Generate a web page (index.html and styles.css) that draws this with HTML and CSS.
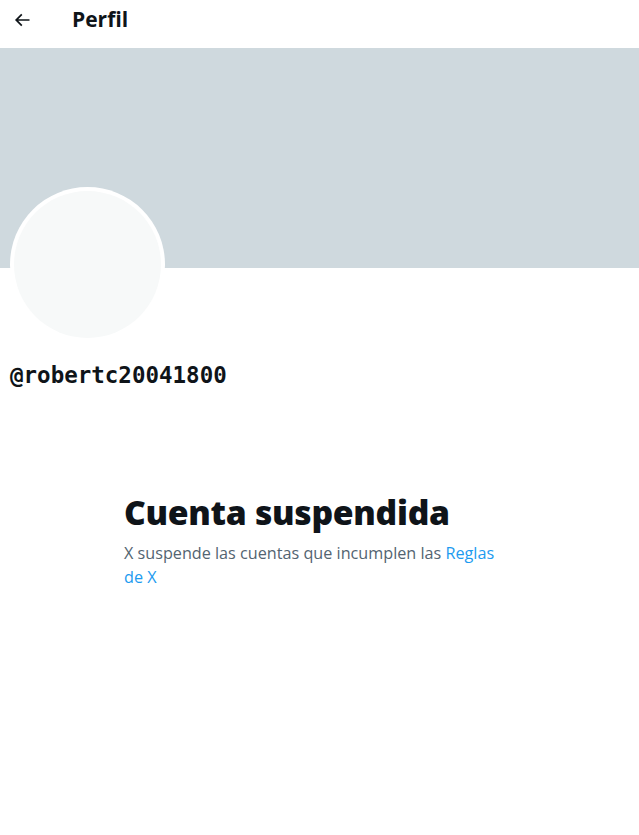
FILE: index.html
```html
<!DOCTYPE html>
<html lang="es">
<head>
<meta charset="utf-8">
<title>Perfil</title>
<link rel="stylesheet" href="styles.css">
</head>
<body>
<header class="topbar">
  <button class="back" aria-label="Atrás">
    <svg viewBox="0 0 24 24" width="20" height="20"><path d="M7.414 13l5.043 5.04-1.414 1.42L3.586 12l7.457-7.46 1.414 1.42L7.414 11H21v2H7.414z" fill="#0f1419"/></svg>
  </button>
  <h1 class="title">Perfil</h1>
</header>
<div class="banner"></div>
<div class="profile">
  <div class="avatar"><div class="avatar-inner"></div></div>
  <div class="handle">@robertc20041800</div>
</div>
<section class="notice">
  <h2 class="notice-title">Cuenta suspendida</h2>
  <p class="notice-text">X suspende las cuentas que incumplen las <a href="#" class="link">Reglas de X</a></p>
</section>
</body>
</html>
```
FILE: styles.css
```css
* { box-sizing: border-box; }
html, body { margin: 0; padding: 0; background: #fff; }
body { font-family: "Open Sans", "Noto Sans", sans-serif; color: #0f1419; width: 639px; }
.topbar { height: 48px; display: flex; align-items: center; padding-left: 11px; }
.back { width: 22px; height: 22px; border: 0; background: none; padding: 0; display: flex; align-items: center; justify-content: center; margin-top: -8px; }
.title { margin: 0 0 0 39px; font-size: 21px; font-weight: 700; line-height: 24px; margin-top: -10px; }
.banner { height: 220px; background: #cfd9de; }
.profile { padding: 0 10px; }
.avatar { width: 155px; height: 155px; border-radius: 50%; background: #fff; padding: 4px; margin-top: -81px; }
.avatar-inner { width: 100%; height: 100%; border-radius: 50%; background: #f7f9f9; }
.handle { margin-top: 19px; font-family: "DejaVu Sans Mono", monospace; font-weight: 700; font-size: 22.5px; line-height: 28px; }
.notice { width: 391px; margin: 103px auto 0; }
.notice-title { margin: 0; font-family: "Open Sans", sans-serif; font-size: 33.7px; font-weight: 800; line-height: 40px; letter-spacing: -0.3px; }
.notice-text { margin: 9px 0 0; font-size: 16.2px; line-height: 24px; color: #536471; width: 384px; }
.link { color: #1d9bf0; text-decoration: none; }
```
